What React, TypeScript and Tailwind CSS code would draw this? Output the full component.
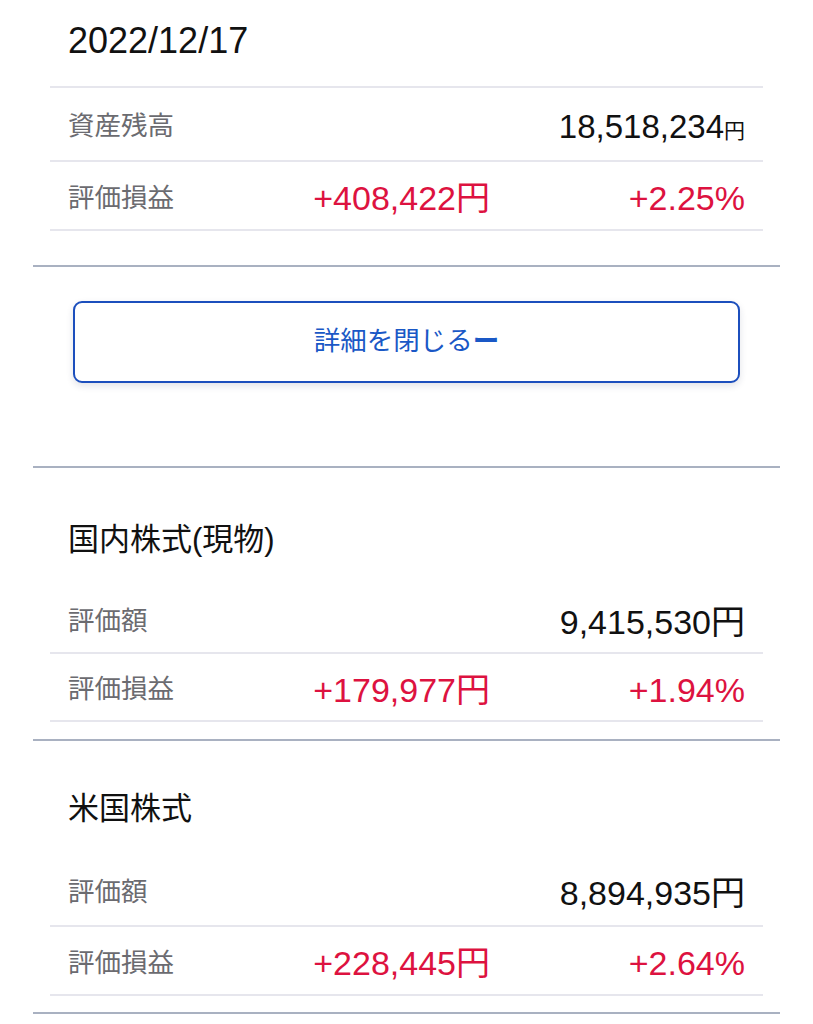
const font = { fontFamily: '"Liberation Sans", "Noto Sans CJK JP", sans-serif' }

type Row = {
    label: string
    amount?: string
    percent?: string
    value?: string
    small?: boolean
    h: string
}

const PlainRow = ({ label, value, small, h }: Row) => (
    <div className={`${h} mx-[50px] px-[18px] pt-[6px] border-b-2 border-[#e6e6ed] flex items-center justify-between`}>
        <span className="text-[26.5px] text-[#6b6b70]">{label}</span>
        {small ? (
            <span className="text-[33px] text-[#111]">
                {value}
                <span className="text-[21px]">円</span>
            </span>
        ) : (
            <span className="text-[34px] text-[#111]">{value}円</span>
        )}
    </div>
)

const GainRow = ({ label, amount, percent, h }: Row) => (
    <div className={`${h} mx-[50px] px-[18px] pt-[6px] border-b-2 border-[#e6e6ed] flex items-center`}>
        <div className="w-[422px] flex items-center justify-between">
            <span className="text-[26.5px] text-[#6b6b70]">{label}</span>
            <span className="text-[34px] text-[#dd1240]">{amount}円</span>
        </div>
        <span className="flex-1 text-right text-[34px] text-[#dd1240]">{percent}</span>
    </div>
)

const Divider = () => <div className="mx-[33px] h-[2px] bg-[#a9b1c1]" />

const AssetSection = ({ title, value, amount, percent, headH, rowH1, rowH2, gap }: {
    title: string
    value: string
    amount: string
    percent: string
    headH: string
    rowH1: string
    rowH2: string
    gap: string
}) => (
    <section>
        <div className={`${headH} px-[68px] flex items-end pb-[28px]`}>
            <h2 className="text-[31px] leading-[36px] text-[#111]">{title}</h2>
        </div>
        <PlainRow label="評価額" value={value} h={rowH1} />
        <GainRow label="評価損益" amount={amount} percent={percent} h={rowH2} />
        <div className={gap} />
        <Divider />
    </section>
)

export default function App() {
    return (
        <div className="w-[813px] h-[1024px] bg-white overflow-hidden" style={font}>
            <section>
                <div className="h-[88px] mx-[50px] px-[18px] border-b-2 border-[#e6e6ed] flex items-center pb-[4px]">
                    <span className="text-[36px] text-[#111]">2022/12/17</span>
                </div>
                <PlainRow label="資産残高" value="18,518,234" small h="h-[74px]" />
                <GainRow label="評価損益" amount="+408,422" percent="+2.25%" h="h-[69px]" />
                <div className="h-[34px]" />
                <Divider />
            </section>

            <div className="pt-[34px] pb-[83px] px-[73px]">
                <button
                    type="button"
                    className="w-full h-[82px] rounded-[9px] border-2 border-[#1c4fbd] bg-white shadow-[0_3px_7px_rgba(30,40,80,0.13)] flex items-center justify-center text-[26.5px] text-[#1a58c6]"
                >
                    詳細を閉じる<span className="font-bold">ー</span>
                </button>
            </div>
            <Divider />

            <AssetSection
                title="国内株式(現物)"
                value="9,415,530"
                amount="+179,977"
                percent="+1.94%"
                headH="h-[118px]"
                rowH1="h-[68px]"
                rowH2="h-[68px]"
                gap="h-[17px]"
            />
            <AssetSection
                title="米国株式"
                value="8,894,935"
                amount="+228,445"
                percent="+2.64%"
                headH="h-[114px]"
                rowH1="h-[72px]"
                rowH2="h-[69px]"
                gap="h-[16px]"
            />
        </div>
    )
}
